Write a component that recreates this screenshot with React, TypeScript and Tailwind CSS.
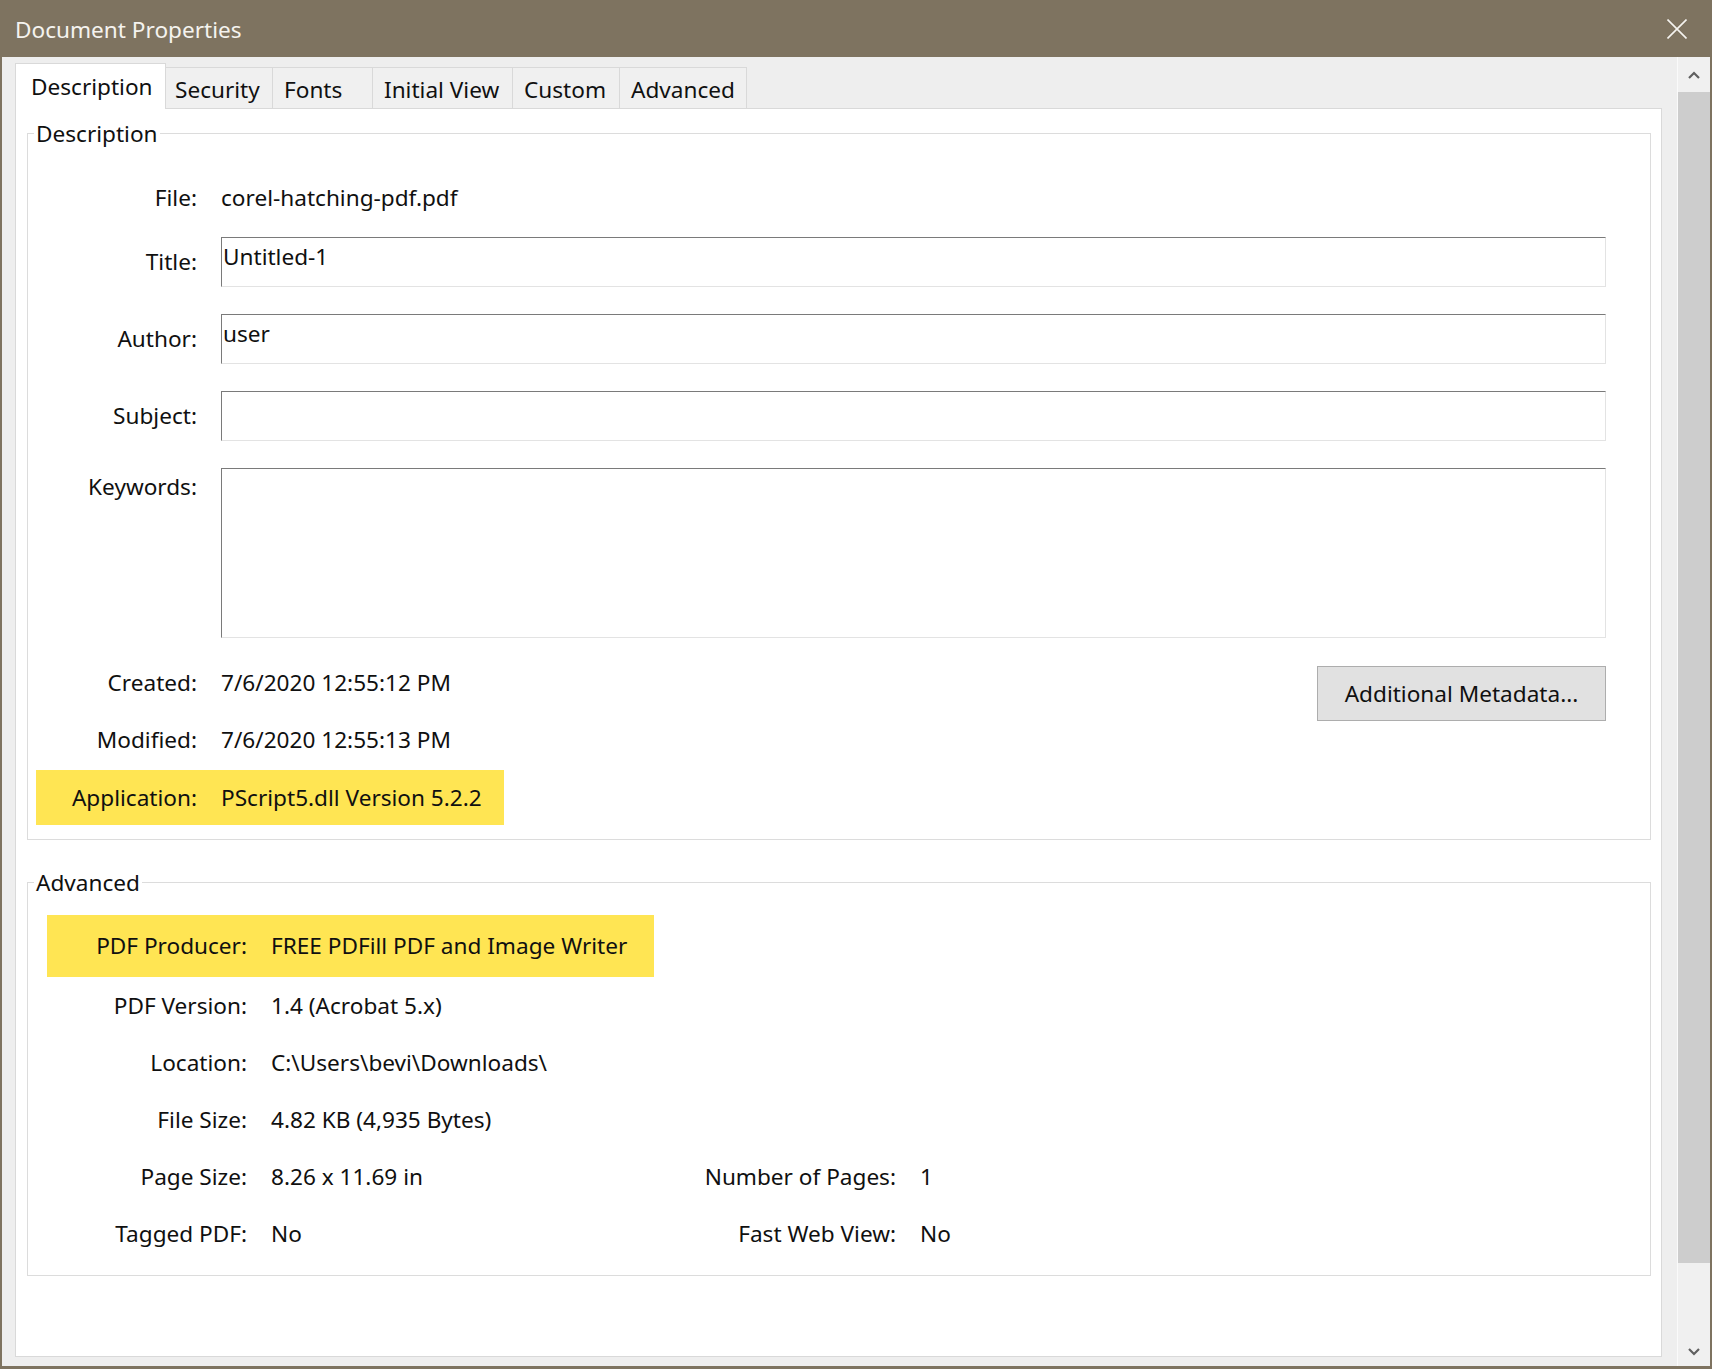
import React from 'react';

// Tab widths are fixed, text sits left with a small inset
const tabs = [
  { label: 'Description', width: 'w-[151px]', pad: 'pl-[15px]' },
  { label: 'Security', width: 'w-[107px]', pad: 'pl-[9px]' },
  { label: 'Fonts', width: 'w-[100px]', pad: 'pl-[11px]' },
  { label: 'Initial View', width: 'w-[140px]', pad: 'pl-[11px]' },
  { label: 'Custom', width: 'w-[107px]', pad: 'pl-[11px]' },
  { label: 'Advanced', width: 'w-[127px]', pad: 'pl-[11px]' },
];

function GroupBox({
  title,
  className,
  children,
}: {
  title: string;
  className?: string;
  children: React.ReactNode;
}) {
  return (
    <div className={`relative border border-[#dcdcdc] ${className ?? ''}`}>
      {/* legend sits over the top border, like a fieldset */}
      <span className="absolute left-[6px] top-[-16px] bg-white px-[2px] leading-[32px]">{title}</span>
      {children}
    </div>
  );
}

function TextBox({ value, height }: { value?: string; height: string }) {
  return (
    <div
      className={`flex-1 ml-[24px] ${height} border border-t-[#7a7a7a] border-l-[#7a7a7a] border-r-[#e3e3e3] border-b-[#e3e3e3] pl-[1px] pt-[3px] leading-[32px]`}
    >
      {value}
    </div>
  );
}

export default function App() {
  return (
    <div className="w-[1712px] h-[1369px] bg-[#7e7360] flex flex-col overflow-hidden font-['Noto_Sans',sans-serif] text-[22.6px] text-[#101010]">
      {/* Title bar */}
      <div className="h-[57px] shrink-0 flex items-center justify-between pl-[15px] pr-[25px]">
        <span className="text-[#f5f3ef] text-[22.6px] pt-[2px]">Document Properties</span>
        <svg width="20" height="20" viewBox="0 0 20 20">
          <path d="M0.5 0.5L19.5 19.5M19.5 0.5L0.5 19.5" stroke="#f5f3ef" strokeWidth="1.6" />
        </svg>
      </div>

      <div className="flex-1 mx-[2px] mb-[3px] bg-[#eeeeee] flex">
        <div className="flex-1 flex flex-col pl-[13px] pr-[15px] pb-[9px]">
          {/* Tabs */}
          <div className="h-[51px] flex items-end">
            {tabs.map((tab, i) =>
              i === 0 ? (
                <div
                  key={tab.label}
                  className={`${tab.width} ${tab.pad} h-[46px] bg-white border border-b-0 border-[#d9d9d9] flex items-center relative top-[1px]`}
                >
                  {tab.label}
                </div>
              ) : (
                <div
                  key={tab.label}
                  className={`${tab.width} ${tab.pad} h-[41px] bg-[#f0f0f0] border border-l-0 border-b-0 border-[#d9d9d9] flex items-center pt-[4px]`}
                >
                  {tab.label}
                </div>
              )
            )}
          </div>

          {/* Panel */}
          <div className="flex-1 bg-white border border-[#d9d9d9] pl-[11px] pr-[10px] pt-[24px]">
            <GroupBox title="Description" className="h-[707px] pt-[39px] pr-[44px]">
              <div className="flex items-center h-[50px]">
                <div className="w-[169px] text-right">File:</div>
                <div className="ml-[24px]">corel-hatching-pdf.pdf</div>
              </div>
              <div className="flex items-center mt-[14px]">
                <div className="w-[169px] text-right">Title:</div>
                <TextBox value="Untitled-1" height="h-[50px]" />
              </div>
              <div className="flex items-center mt-[27px]">
                <div className="w-[169px] text-right">Author:</div>
                <TextBox value="user" height="h-[50px]" />
              </div>
              <div className="flex items-center mt-[27px]">
                <div className="w-[169px] text-right">Subject:</div>
                <TextBox height="h-[50px]" />
              </div>
              <div className="flex items-start mt-[27px]">
                <div className="w-[169px] text-right pt-[2px]">Keywords:</div>
                <TextBox height="h-[170px]" />
              </div>

              <div className="flex mt-[20px]">
                <div className="flex flex-col">
                  <div className="flex items-center h-[50px]">
                    <div className="w-[169px] text-right">Created:</div>
                    <div className="ml-[24px]">7/6/2020 12:55:12 PM</div>
                  </div>
                  <div className="flex items-center h-[50px] mt-[7px]">
                    <div className="w-[169px] text-right">Modified:</div>
                    <div className="ml-[24px]">7/6/2020 12:55:13 PM</div>
                  </div>
                  <div className="flex items-center h-[55px] mt-[5px] ml-[8px] pr-[22px] bg-[#ffe553]">
                    <div className="w-[161px] text-right">Application:</div>
                    <div className="ml-[24px]">PScript5.dll Version 5.2.2</div>
                  </div>
                </div>
                <div className="flex-1" />
                <button className="mt-[8px] w-[289px] h-[55px] bg-[#e1e1e1] border border-[#adadad] text-[22.6px]">
                  Additional Metadata...
                </button>
              </div>
            </GroupBox>

            <GroupBox title="Advanced" className="mt-[42px] h-[394px] pt-[32px]">
              <div className="flex items-center h-[62px] ml-[19px] pr-[27px] bg-[#ffe553] w-fit">
                <div className="w-[200px] text-right">PDF Producer:</div>
                <div className="ml-[24px]">FREE PDFill PDF and Image Writer</div>
              </div>
              {[
                ['PDF Version:', '1.4 (Acrobat 5.x)'],
                ['Location:', 'C:\\Users\\bevi\\Downloads\\'],
                ['File Size:', '4.82 KB (4,935 Bytes)'],
                ['Page Size:', '8.26 x 11.69 in', 'Number of Pages:', '1'],
                ['Tagged PDF:', 'No', 'Fast Web View:', 'No'],
              ].map(([label, value, label2, value2]) => (
                <div key={label} className="flex items-center h-[57px]">
                  <div className="w-[219px] text-right">{label}</div>
                  <div className="ml-[24px] w-[375px]">{value}</div>
                  {label2 && (
                    <>
                      <div className="w-[250px] text-right">{label2}</div>
                      <div className="ml-[24px]">{value2}</div>
                    </>
                  )}
                </div>
              ))}
            </GroupBox>
          </div>
        </div>

        {/* Scrollbar */}
        <div className="w-[33px] flex flex-col bg-[#f0f0f0] border-l border-[#fafafa]">
          <div className="h-[35px] flex items-center justify-center">
            <svg width="12" height="8" viewBox="0 0 12 8">
              <path d="M1 7L6 2L11 7" fill="none" stroke="#606060" strokeWidth="2.2" />
            </svg>
          </div>
          <div className="h-[1171px] bg-[#cdcdcd]" />
          <div className="flex-1 flex items-end justify-center pb-[10px]">
            <svg width="12" height="8" viewBox="0 0 12 8">
              <path d="M1 1L6 6L11 1" fill="none" stroke="#606060" strokeWidth="2.2" />
            </svg>
          </div>
        </div>
      </div>
    </div>
  );
}
